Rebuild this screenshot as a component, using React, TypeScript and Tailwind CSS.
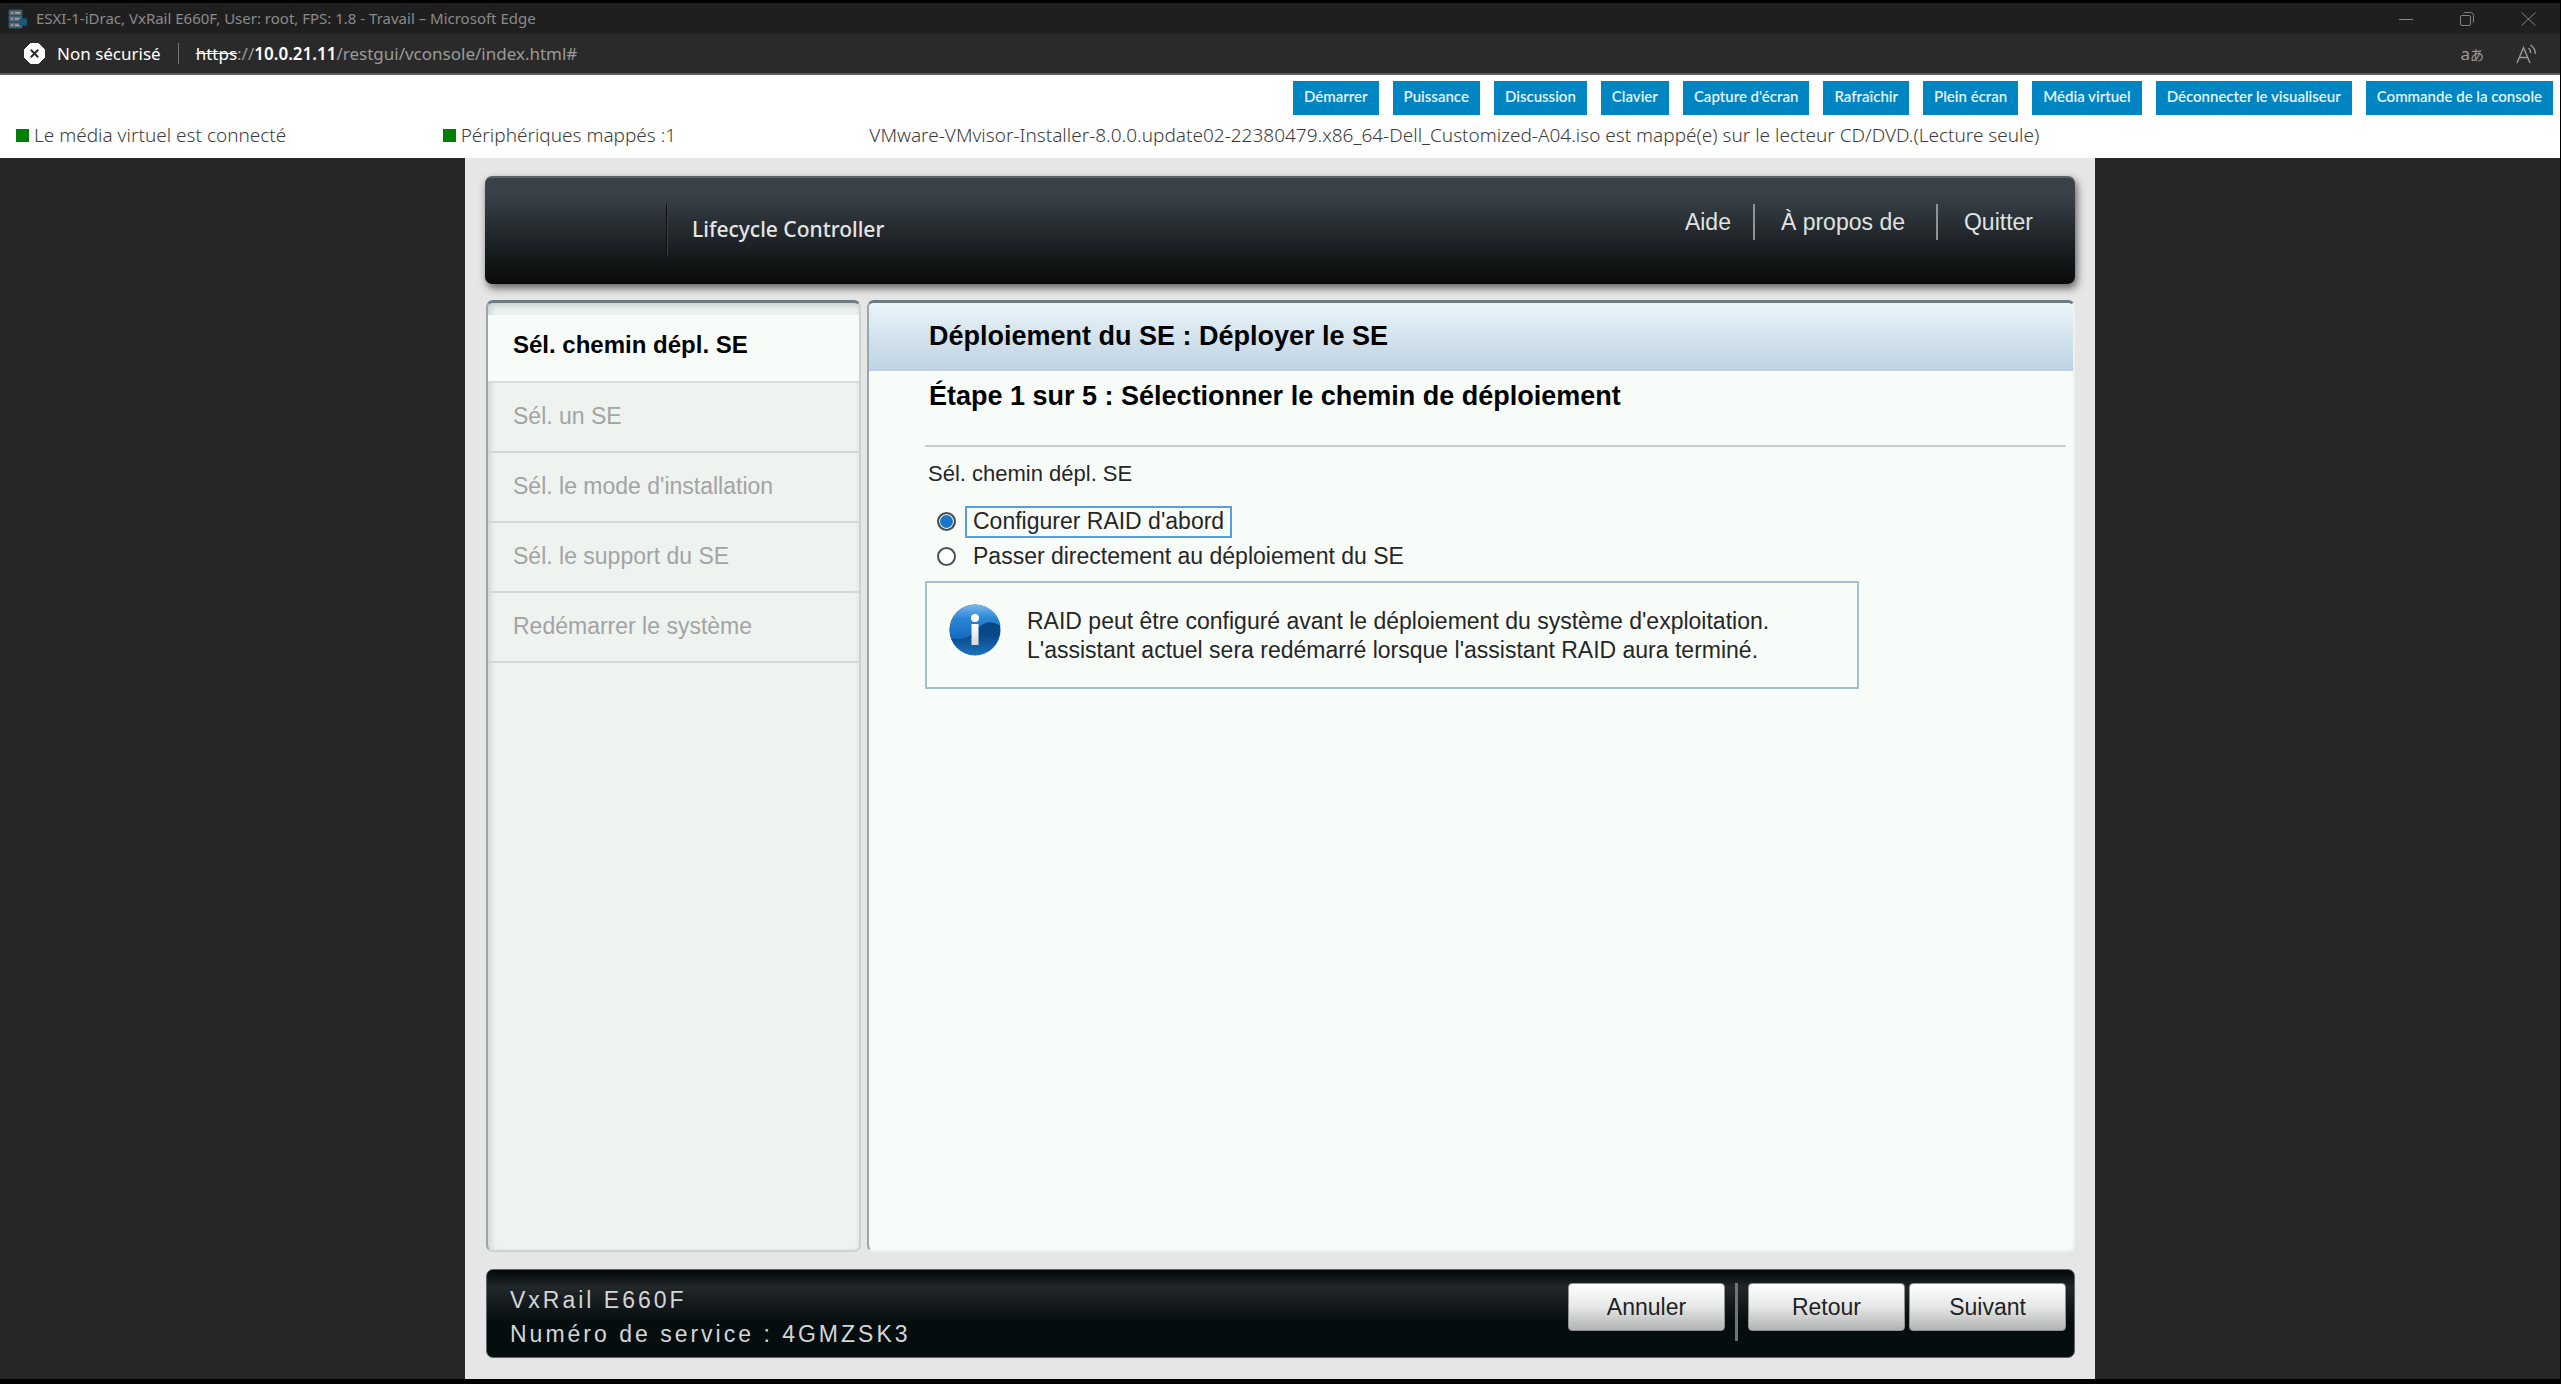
import React, { useState } from "react";

const toolbar = [
  "Démarrer",
  "Puissance",
  "Discussion",
  "Clavier",
  "Capture d'écran",
  "Rafraîchir",
  "Plein écran",
  "Média virtuel",
  "Déconnecter le visualiseur",
  "Commande de la console",
];

const steps = [
  "Sél. chemin dépl. SE",
  "Sél. un SE",
  "Sél. le mode d'installation",
  "Sél. le support du SE",
  "Redémarrer le système",
];

function ServerIcon() {
  return (
    <svg width="20" height="20" viewBox="0 0 20 20" aria-hidden="true">
      <path d="M1 1h13v5.500H1zM1 7h13v5.500H1zM1 13.500h13V19H1z" fill="#5d6a72" stroke="#27536d" strokeWidth="1" />
      <path d="M3 3.700h2M7 3.700h5M3 9.700h2M7 9.700h5M3 16.200h2M7 16.200h5" stroke="#a3a9ac" strokeWidth="1.500" />
      <path d="M11 9.500h8v7h-8z" fill="#17587c" />
    </svg>
  );
}

function NotSecureIcon() {
  return (
    <svg width="21" height="21" viewBox="0 0 21 21" aria-hidden="true">
      <path d="M6.5.5h8l6 6v8l-6 6h-8l-6-6v-8z" fill="#fff" stroke="#fff" strokeLinejoin="round" />
      <path d="M6.8 6.8l7.4 7.4M14.2 6.8l-7.4 7.4" stroke="#2a2a2a" strokeWidth="2" />
    </svg>
  );
}

function InfoIcon() {
  return (
    <svg className="shrink-0" width="52" height="52" viewBox="0 0 52 52" aria-hidden="true">
      <defs>
        <linearGradient id="ball" x1="0" y1="0" x2="0" y2="1">
          <stop offset="0" stopColor="#0a3f78" />
          <stop offset="0.6" stopColor="#08498a" />
          <stop offset="1" stopColor="#1a72c0" />
        </linearGradient>
        <linearGradient id="gloss" x1="0" y1="0" x2="0" y2="1">
          <stop offset="0" stopColor="#7db8ea" />
          <stop offset="0.4" stopColor="#2b86d6" />
          <stop offset="1" stopColor="#1569bd" />
        </linearGradient>
        <linearGradient id="stem" x1="0" y1="0" x2="0" y2="1">
          <stop offset="0" stopColor="#ffffff" />
          <stop offset="1" stopColor="#d4d8dc" />
        </linearGradient>
      </defs>
      <circle cx="26" cy="26" r="25.5" fill="url(#ball)" />
      <path d="M26 .5A25.500 25.500 0 0 1 51.500 22C40 14 32 20 25 28S10 36 2 34A25.500 25.500 0 0 1 26 .5z" fill="url(#gloss)" />
      <circle cx="26" cy="14" r="4" fill="#fff" />
      <rect x="22.500" y="20" width="7" height="21" fill="url(#stem)" />
    </svg>
  );
}

function TitleBar() {
  return (
    <header className="flex h-[31px] items-center justify-between bg-[#1f1f1f] pr-6 pl-2 text-[#8a8a8a]">
      <div className="flex items-center gap-2">
        <ServerIcon />
        <span className="font-['Noto_Sans',sans-serif] text-[15px] whitespace-nowrap">
          ESXI-1-iDrac, VxRail E660F, User: root, FPS: 1.8 - Travail – Microsoft Edge
        </span>
      </div>
      <div className="flex items-center gap-[47px]">
        <button type="button" aria-label="Réduire">
          <svg width="14" height="14" viewBox="0 0 14 14" fill="none" stroke="#858585">
            <path d="M0 7.500h14" />
          </svg>
        </button>
        <button type="button" aria-label="Restaurer">
          <svg width="14" height="14" viewBox="0 0 14 14" fill="none" stroke="#858585">
            <rect x=".5" y="3.500" width="10" height="10" rx="1.500" />
            <path d="M3.500 1.500c.3-.6.800-1 1.500-1h5.500a3 3 0 0 1 3 3V9c0 .7-.4 1.200-1 1.500" />
          </svg>
        </button>
        <button type="button" aria-label="Fermer">
          <svg width="15" height="14" viewBox="0 0 15 14" fill="none" stroke="#858585">
            <path d="M.5.5l14 13M14.500.5l-14 13" />
          </svg>
        </button>
      </div>
    </header>
  );
}

function AddressBar() {
  return (
    <div className="flex h-[41px] items-center justify-between border-b-2 border-[#5c5c5c] bg-[#2a2a2a] pr-[22px] pl-6 font-['Noto_Sans',sans-serif] text-[17px] whitespace-nowrap text-white">
      <div className="flex items-center">
        <button type="button" className="flex items-center gap-3">
          <NotSecureIcon />
          Non sécurisé
        </button>
        <span className="mx-[17px] h-[21px] w-px bg-[#777]" />
        <a href="#" className="text-[#9a9a9a]">
          <span className="text-white line-through">https</span>://
          <span className="font-semibold text-white">10.0.21.11</span>/restgui/vconsole/index.html#
        </a>
      </div>
      <div className="flex items-center gap-8 text-[#9a9a9a]">
        <button type="button" aria-label="Traduire" className="flex items-baseline leading-5">
          <span className="text-[17px]">a</span>
          <span className="font-['Noto_Sans_CJK_JP',sans-serif] text-[14px]">あ</span>
        </button>
        <button type="button" aria-label="Lecture à voix haute">
          <svg width="22" height="20" viewBox="0 0 22 20" fill="none" stroke="#9a9a9a" strokeWidth="1.400">
            <path d="M1 19L7.500 3.500 14 19M3.400 13.500h8.200" />
            <path d="M12.500 4c1.500 1.200 2.200 3 2.200 5M14.500 1c3 2 4.800 5.200 4.800 9" />
          </svg>
        </button>
      </div>
    </div>
  );
}

function StatusItem({ children }: { children: React.ReactNode }) {
  return (
    <p className="flex items-center gap-[5px] pl-4">
      <span className="size-[13px] bg-[#008000]" />
      {children}
    </p>
  );
}

function ViewerBar() {
  return (
    <section className="bg-white whitespace-nowrap">
      <nav className="flex justify-end gap-[14px] pt-[6px] pr-[7px] font-['Lato',sans-serif]">
        {toolbar.map((t) => (
          <button
            key={t}
            type="button"
            className="h-[34px] bg-[#0085c3] px-[11px] pb-1 text-[15px] font-semibold text-[#e6f4fb]"
          >
            {t}
          </button>
        ))}
      </nav>
      <div className="grid h-[43px] grid-cols-6 items-center pb-[2px] font-['Noto_Sans',sans-serif] text-[19px] font-light text-[#3c3c3c]">
        <StatusItem>Le média virtuel est connecté</StatusItem>
        <StatusItem>Périphériques mappés :1</StatusItem>
        <p className="col-span-4 pl-4">
          VMware-VMvisor-Installer-8.0.0.update02-22380479.x86_64-Dell_Customized-A04.iso est mappé(e) sur le lecteur
          CD/DVD.(Lecture seule)
        </p>
      </div>
    </section>
  );
}

function ConsoleHeader() {
  return (
    <header className="flex h-[108px] items-center justify-between rounded-[7px] border-t-2 border-[#59636a] bg-linear-to-b from-[#3a4149] from-15% via-[#1d2326] via-60% to-[#0a0b0b] pr-[42px] shadow-[2px_4px_8px_rgba(0,0,0,0.6)]">
      <div className="flex items-center pb-[2px]">
        <span className="ml-[181px] h-[52px] w-[2px] border-l border-[#0b0d0f] bg-[#3c4348]" />
        <h1 className="ml-6 font-['Noto_Sans',sans-serif] text-[21px] font-medium text-[#e4e6e6]">
          Lifecycle Controller
        </h1>
      </div>
      <nav className="mb-[18px] flex items-center text-[23px] text-[#dfe3e4]">
        <a href="#" className="pr-[22px]">Aide</a>
        <span className="h-9 w-[2px] bg-[#8e9394]" />
        <a href="#" className="pr-[31px] pl-[26px]">À propos de</a>
        <span className="h-9 w-[2px] bg-[#8e9394]" />
        <a href="#" className="pl-[26px]">Quitter</a>
      </nav>
    </header>
  );
}

function Sidebar() {
  return (
    <aside className="w-[375px] shrink-0 rounded-[7px] border-2 border-t-3 border-[#cfd2d2] border-t-[#6f7c82] border-l-[#9aa6ab] bg-[#eff3f0] pt-3 shadow-[inset_2px_3px_6px_rgba(120,140,155,0.35)]">
      <ol>
        {steps.map((s, i) => (
          <li
            key={s}
            className={
              i === 0
                ? "flex h-[68px] items-center border-b-2 border-[#d9dbd9] bg-[#f8fcf9] pb-[6px] pl-[25px] text-[24px] font-bold text-black"
                : "flex h-[70px] items-center border-b-2 border-[#d6d6d5] pb-[2px] pl-[25px] text-[23px] text-[#a3a3a3]"
            }
          >
            {s}
          </li>
        ))}
      </ol>
    </aside>
  );
}

function Radio({ label, checked, onSelect }: { label: string; checked: boolean; onSelect: () => void }) {
  return (
    <label className="flex h-[35px] items-center gap-[9px]">
      <input
        type="radio"
        name="path"
        checked={checked}
        onChange={onSelect}
        className="size-[19px] appearance-none rounded-full border-2 border-[#4a4f50] bg-white checked:bg-[#1a76c8] checked:shadow-[inset_0_0_0_1px_#ffffff]"
      />
      <span
        className={
          checked
            ? "flex h-8 items-center border-2 border-[#55a0dc] px-[6px]"
            : "flex h-8 items-center border-2 border-transparent px-[6px]"
        }
      >
        {label}
      </span>
    </label>
  );
}

function Content() {
  const [choice, setChoice] = useState(0);
  return (
    <main className="flex min-w-0 grow flex-col rounded-[7px] border-2 border-t-3 border-[#eef3f1] border-t-[#6f7c82] border-l-[#9aa6ab] bg-[#f8fcf9] text-[22px] text-[#262626]">
      <h2 className="flex h-[68px] items-center rounded-t-[5px] border-b-2 border-[#c3cfd8] bg-linear-to-b from-[#eaf5fa] to-[#bfd3e2] pl-[60px] text-[27px] font-bold text-black">
        Déploiement du SE : Déployer le SE
      </h2>
      <div className="pr-[7px] pl-14">
        <h3 className="flex h-[76px] items-start border-b-2 border-[#c9cdcb] pt-[11px] pl-1 text-[27px] leading-7 font-bold text-black">
          Étape 1 sur 5 : Sélectionner le chemin de déploiement
        </h3>
        <fieldset>
          <legend className="pt-[10px] pb-[14px] pl-[3px]">Sél. chemin dépl. SE</legend>
          <div className="pl-3 text-[23px]">
            <Radio label="Configurer RAID d'abord" checked={choice === 0} onSelect={() => setChoice(0)} />
            <Radio
              label="Passer directement au déploiement du SE"
              checked={choice === 1}
              onSelect={() => setChoice(1)}
            />
          </div>
        </fieldset>
        <div className="mt-[7px] mr-[207px] flex h-[108px] items-start gap-[26px] border-2 border-[#a3bfd0] pt-[21px] pl-[22px]">
          <InfoIcon />
          <p className="pt-[3px] text-[23px] leading-[29px]">
            RAID peut être configuré avant le déploiement du système d'exploitation.
            <br />
            L'assistant actuel sera redémarré lorsque l'assistant RAID aura terminé.
          </p>
        </div>
      </div>
    </main>
  );
}

function FooterButton({ children }: { children: React.ReactNode }) {
  return (
    <button
      type="button"
      className="h-12 w-[157px] rounded-[4px] border border-[#8f9393] bg-linear-to-b from-white via-[#e6e8e8] via-50% to-[#b2b4b4] pt-px text-[23px] text-[#222]"
    >
      {children}
    </button>
  );
}

function ConsoleFooter() {
  return (
    <footer className="flex h-[89px] items-start justify-between rounded-[7px] border border-[#5d6464] bg-linear-to-b from-[#04090a] via-[#22272a] via-20% to-[#060d0e] to-60% pt-[13px] pr-2 pl-[23px] text-[23px]">
      <div className="leading-[34px] tracking-[3px] text-[#d3d6d6]">
        <p>VxRail E660F</p>
        <p>Numéro de service : 4GMZSK3</p>
      </div>
      <div className="flex items-start">
        <FooterButton>Annuler</FooterButton>
        <span className="mx-[10px] h-[58px] w-[3px] bg-[#6f7476]" />
        <FooterButton>Retour</FooterButton>
        <span className="w-1" />
        <FooterButton>Suivant</FooterButton>
      </div>
    </footer>
  );
}

export default function App() {
  return (
    <div className="flex min-h-screen flex-col border-t-3 border-r border-b-[5px] border-black bg-[#262626]">
      <TitleBar />
      <AddressBar />
      <ViewerBar />
      <div className="mx-auto flex w-full max-w-[1630px] grow flex-col bg-[#e6e6e6] px-5 pt-[18px] pb-[21px] font-['Liberation_Sans',Arial,sans-serif]">
        <ConsoleHeader />
        <div className="mt-4 flex grow gap-[6px] pl-px">
          <Sidebar />
          <Content />
        </div>
        <div className="mt-[17px] pl-px">
          <ConsoleFooter />
        </div>
      </div>
    </div>
  );
}
